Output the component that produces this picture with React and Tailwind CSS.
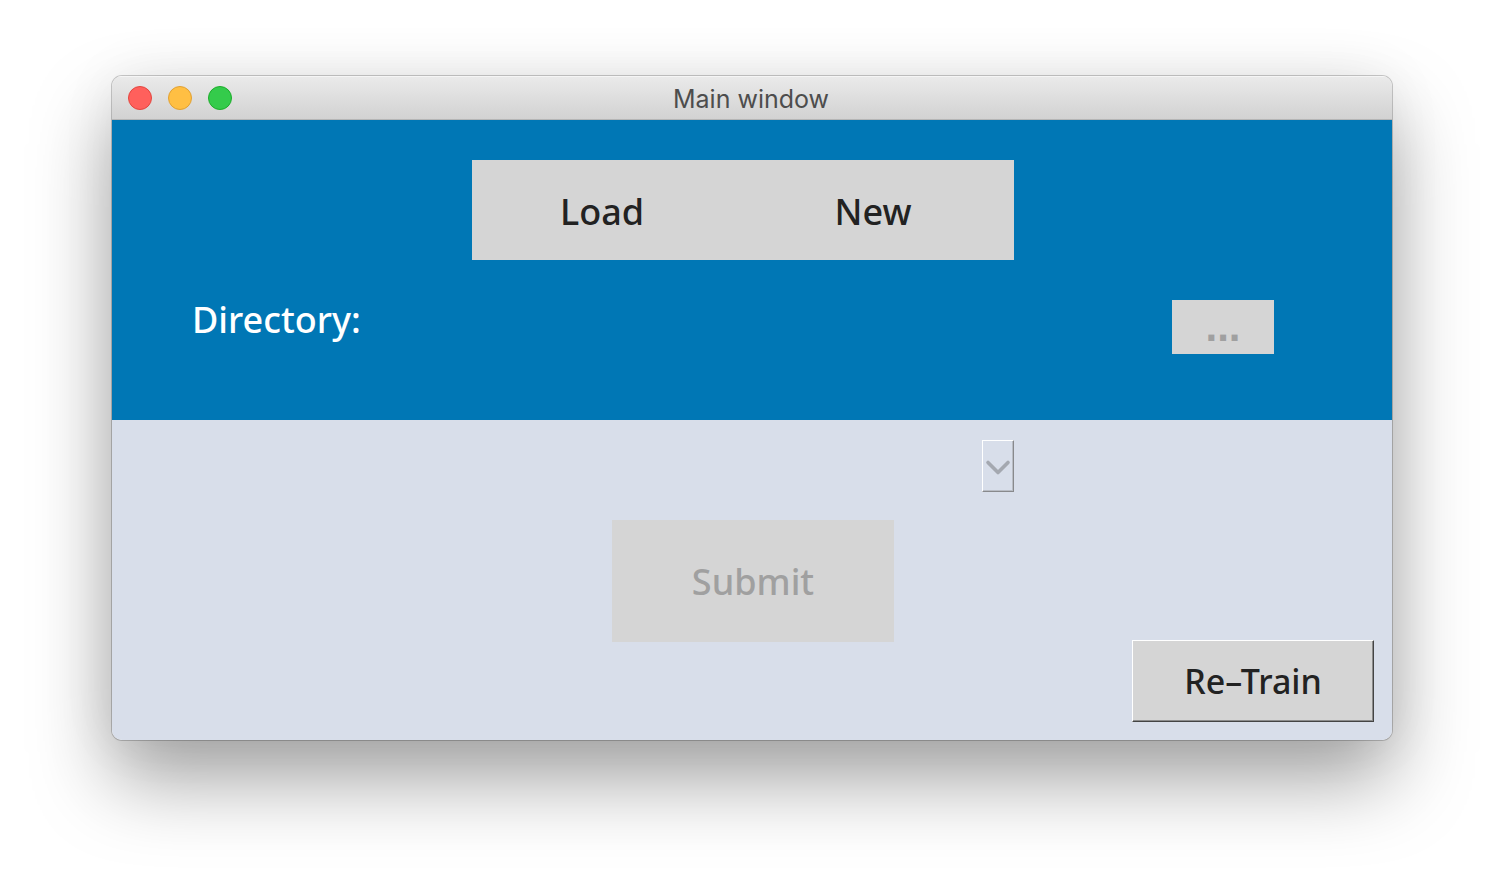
import { useState } from "react";

function TitleBar() {
  return (
    <header className="grid h-11 grid-cols-3 items-center border-t border-b border-t-[#f5f5f5] border-b-[#b5b5b5] bg-linear-to-b from-[#eaeaea] to-[#d2d2d2] px-4">
      <div className="flex gap-4">
        <button type="button" aria-label="Close" className="size-6 rounded-full border border-[#e2463f] bg-[#ff605c]" />
        <button type="button" aria-label="Minimize" className="size-6 rounded-full border border-[#e0a033] bg-[#ffbf43]" />
        <button type="button" aria-label="Zoom" className="size-6 rounded-full border border-[#1dad2b] bg-[#34cb4b]" />
      </div>
      <h1 className="pt-0.5 pr-0.5 text-center font-['Inter',sans-serif] text-[25px] leading-8 font-normal text-[#4d4d4d]">Main window</h1>
    </header>
  );
}

export default function App() {
  const [model, setModel] = useState("");

  return (
    <div className="min-h-screen overflow-hidden bg-white px-28 pt-19 pb-37 font-['Noto_Sans',sans-serif] font-medium">
      <main className="overflow-hidden rounded-[10px] shadow-[0_0_0_1px_rgba(0,0,0,0.2),0_40px_80px_rgba(0,0,0,0.36),0_0_60px_rgba(0,0,0,0.06)]">
        <TitleBar />
        <section className="h-75 bg-[#0077b5] pt-10">
          <div className="flex justify-center pr-[18px] text-[36px] text-[#222222]">
            <button type="button" className="h-25 w-65 bg-[#d5d5d5] pt-1">Load</button>
            <button type="button" className="h-25 w-[282px] bg-[#d5d5d5] pt-1">New</button>
          </div>
          <div className="mt-10 flex items-start justify-between pr-[118px] pl-20">
            <span className="text-[36px] leading-10 text-white">Directory:</span>
            <button type="button" disabled aria-label="Browse" className="h-[54px] w-[102px] bg-[#d5d5d5] font-['Liberation_Sans',sans-serif] text-[42px] leading-[54px] font-bold text-[#a0a0a0]">...</button>
          </div>
        </section>
        <section className="flex h-80 flex-col bg-[#d8deea] pt-5">
          <div className="flex justify-center pr-[18px]">
            <div className="flex w-[542px] justify-end">
              <div className="relative h-[52px] w-8">
                <select
                  aria-label="Model"
                  disabled
                  value={model}
                  onChange={(e) => setModel(e.target.value)}
                  className="size-full appearance-none border border-t-white border-r-[#88898c] border-b-[#88898c] border-l-white bg-[#d8deea] shadow-[inset_-1px_-1px_0_#b9bdc5]"
                >
                  <option value=""></option>
                </select>
                <svg viewBox="0 0 32 52" className="pointer-events-none absolute inset-0 size-full" fill="none" stroke="#a4a8b0" strokeWidth="3.6" strokeLinecap="round" strokeLinejoin="round">
                  <path d="M6 22.500L16 32.500L26 22.500" />
                </svg>
              </div>
            </div>
          </div>
          <div className="mt-7 flex justify-center pl-0.5">
            <button type="button" disabled className="h-[122px] w-[282px] bg-[#d5d5d5] pt-0.5 text-[36px] text-[#a0a0a0]">Submit</button>
          </div>
          <div className="-mt-0.5 flex justify-end pr-[18px]">
            <button type="button" className="h-[82px] w-[242px] border border-t-white border-r-[#444444] border-b-[#444444] border-l-white bg-[#d5d5d5] text-[34px] text-[#222222] shadow-[inset_-1px_-1px_0_#8c8c8c]">Re–Train</button>
          </div>
        </section>
      </main>
    </div>
  );
}
